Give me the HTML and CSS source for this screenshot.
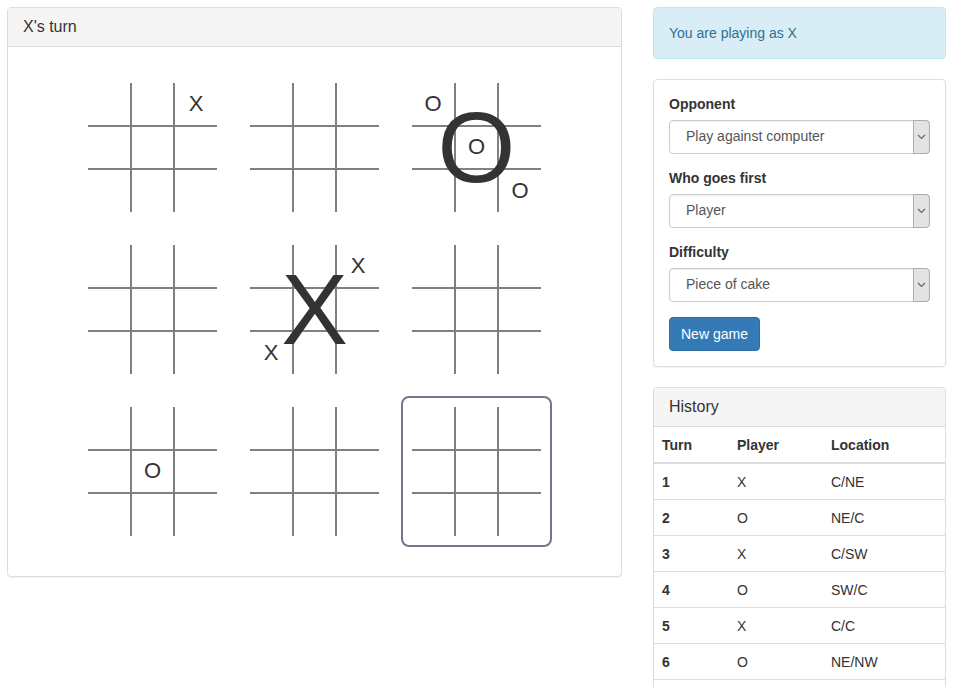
FILE: index.html
```html
<!doctype html>
<html>
<head>
<meta charset="utf-8">
<title>Ultimate tic-tac-toe</title>
<link rel="stylesheet" href="styles.css">
</head>
<body>
<div class="page">
	<div class="game panel">
		<div class="panel-heading"><h3 class="panel-title">X's turn</h3></div>
		<div class="boards">
			<!-- NW -->
			<div class="board">
				<div class="cells">
					<div class="cell"></div><div class="cell"></div><div class="cell">X</div>
					<div class="cell"></div><div class="cell"></div><div class="cell"></div>
					<div class="cell"></div><div class="cell"></div><div class="cell"></div>
				</div>
			</div>
			<!-- N -->
			<div class="board">
				<div class="cells">
					<div class="cell"></div><div class="cell"></div><div class="cell"></div>
					<div class="cell"></div><div class="cell"></div><div class="cell"></div>
					<div class="cell"></div><div class="cell"></div><div class="cell"></div>
				</div>
			</div>
			<!-- NE: won by O -->
			<div class="board">
				<div class="cells">
					<div class="cell">O</div><div class="cell"></div><div class="cell"></div>
					<div class="cell"></div><div class="cell">O</div><div class="cell"></div>
					<div class="cell"></div><div class="cell"></div><div class="cell">O</div>
				</div>
				<span class="winner">O</span>
			</div>
			<!-- W -->
			<div class="board">
				<div class="cells">
					<div class="cell"></div><div class="cell"></div><div class="cell"></div>
					<div class="cell"></div><div class="cell"></div><div class="cell"></div>
					<div class="cell"></div><div class="cell"></div><div class="cell"></div>
				</div>
			</div>
			<!-- C: won by X -->
			<div class="board">
				<div class="cells">
					<div class="cell"></div><div class="cell"></div><div class="cell">X</div>
					<div class="cell"></div><div class="cell">X</div><div class="cell"></div>
					<div class="cell">X</div><div class="cell"></div><div class="cell"></div>
				</div>
				<span class="winner">X</span>
			</div>
			<!-- E -->
			<div class="board">
				<div class="cells">
					<div class="cell"></div><div class="cell"></div><div class="cell"></div>
					<div class="cell"></div><div class="cell"></div><div class="cell"></div>
					<div class="cell"></div><div class="cell"></div><div class="cell"></div>
				</div>
			</div>
			<!-- SW -->
			<div class="board">
				<div class="cells">
					<div class="cell"></div><div class="cell"></div><div class="cell"></div>
					<div class="cell"></div><div class="cell">O</div><div class="cell"></div>
					<div class="cell"></div><div class="cell"></div><div class="cell"></div>
				</div>
			</div>
			<!-- S -->
			<div class="board">
				<div class="cells">
					<div class="cell"></div><div class="cell"></div><div class="cell"></div>
					<div class="cell"></div><div class="cell"></div><div class="cell"></div>
					<div class="cell"></div><div class="cell"></div><div class="cell"></div>
				</div>
			</div>
			<!-- SE: next move goes here -->
			<div class="board active">
				<div class="cells">
					<div class="cell"></div><div class="cell"></div><div class="cell"></div>
					<div class="cell"></div><div class="cell"></div><div class="cell"></div>
					<div class="cell"></div><div class="cell"></div><div class="cell"></div>
				</div>
			</div>
		</div>
	</div>

	<div class="sidebar">
		<div class="alert">You are playing as X</div>

		<div class="panel">
			<div class="panel-body">
				<div class="form-group">
					<label>Opponent</label>
					<div class="select">
						<select><option>Play against computer</option><option>Play against a friend</option></select>
						<span class="select-arrow"><svg width="9" height="6" viewBox="0 0 9 6"><path d="M1 1l3.5 3.5L8 1" fill="none" stroke="#666" stroke-width="1.2"/></svg></span>
					</div>
				</div>
				<div class="form-group">
					<label>Who goes first</label>
					<div class="select">
						<select><option>Player</option><option>Computer</option></select>
						<span class="select-arrow"><svg width="9" height="6" viewBox="0 0 9 6"><path d="M1 1l3.5 3.5L8 1" fill="none" stroke="#666" stroke-width="1.2"/></svg></span>
					</div>
				</div>
				<div class="form-group">
					<label>Difficulty</label>
					<div class="select">
						<select><option>Piece of cake</option><option>Normal</option><option>Hard</option></select>
						<span class="select-arrow"><svg width="9" height="6" viewBox="0 0 9 6"><path d="M1 1l3.5 3.5L8 1" fill="none" stroke="#666" stroke-width="1.2"/></svg></span>
					</div>
				</div>
				<button class="btn">New game</button>
			</div>
		</div>

		<div class="panel">
			<div class="panel-heading"><h3 class="panel-title">History</h3></div>
			<table class="table">
				<colgroup><col class="col-turn"><col class="col-player"><col></colgroup>
				<thead>
					<tr><th>Turn</th><th>Player</th><th>Location</th></tr>
				</thead>
				<tbody>
					<tr><th>1</th><td>X</td><td>C/NE</td></tr>
					<tr><th>2</th><td>O</td><td>NE/C</td></tr>
					<tr><th>3</th><td>X</td><td>C/SW</td></tr>
					<tr><th>4</th><td>O</td><td>SW/C</td></tr>
					<tr><th>5</th><td>X</td><td>C/C</td></tr>
					<tr><th>6</th><td>O</td><td>NE/NW</td></tr>
					<tr><th>7</th><td>X</td><td>NW/NE</td></tr>
					<tr><th>8</th><td>O</td><td>NE/SE</td></tr>
				</tbody>
			</table>
		</div>
	</div>
</div>
</body>
</html>
```

FILE: styles.css
```css
*{ box-sizing:border-box; }
body{ margin:0; font-family:"Liberation Sans", Arial, Helvetica, sans-serif; font-size:14px; line-height:1.42857; color:#333; background:#fff; }

.page{ display:flex; align-items:flex-start; gap:31px; padding:7px 10px 0 7px; }
.game{ flex:none; width:615px; }
.sidebar{ flex:none; width:293px; }

/* panels */
.panel{ background:#fff; border:1px solid #ddd; border-radius:4px; box-shadow:0 1px 1px rgba(0,0,0,.05); margin-bottom:20px; }
.panel-heading{ padding:10px 15px; background:#f5f5f5; border-bottom:1px solid #ddd; border-radius:3px 3px 0 0; }
.panel-title{ margin:0; font-size:16px; font-weight:normal; line-height:1.1; color:#333; }
.panel-body{ padding:15px; }

/* the big board */
.boards{ display:grid; grid-template-columns:repeat(3,151px); gap:11px; justify-content:center; padding:25px 0 29px; }
.board{ position:relative; padding:9px; border:2px solid transparent; border-radius:8px; }
.board.active{ border-color:#6e7a8a; }
.cells{ display:grid; grid-template-columns:42px 41px 42px; grid-template-rows:42px 41px 42px; gap:2px; background:#808080; }
.cell{ display:flex; align-items:center; justify-content:center; background:#fff; font-size:22px; line-height:1; color:#333; }
.winner{ position:absolute; left:0; top:0; right:0; bottom:0; display:flex; align-items:center; justify-content:center; font-size:100px; line-height:1; color:#333; pointer-events:none; }

/* sidebar */
.alert{ padding:16px 15px 14px; margin-bottom:20px; border:1px solid #bce8f1; border-radius:4px; background:#d9edf7; color:#31708f; }

.form-group{ margin-bottom:15px; }
label{ display:inline-block; margin-bottom:5px; font-weight:bold; }
.select{ position:relative; }
.select select{ display:block; width:100%; height:34px; padding:6px 20px 6px 16px; font:inherit; color:#555; background:#fff; border:1px solid #ccc; border-radius:4px; box-shadow:inset 0 1px 1px rgba(0,0,0,.075); -webkit-appearance:none; appearance:none; }
.select-arrow{ position:absolute; top:0; right:0; bottom:0; width:17px; display:flex; align-items:center; justify-content:center; background:#e3e3e3; border:1px solid #adadad; border-radius:0 4px 4px 0; pointer-events:none; }

.btn{ display:inline-block; padding:6px 11px; font:inherit; line-height:20px; color:#fff; background:#337ab7; border:1px solid #2e6da4; border-radius:4px; cursor:pointer; }

/* history */
.table{ width:100%; border-collapse:collapse; }
.table .col-turn{ width:75px; }
.table .col-player{ width:94px; }
.table th, .table td{ padding:8px 8px 7px; line-height:20px; text-align:left; vertical-align:top; border-top:1px solid #ddd; }
.table thead th{ border-top:0; border-bottom:2px solid #ddd; }
```
